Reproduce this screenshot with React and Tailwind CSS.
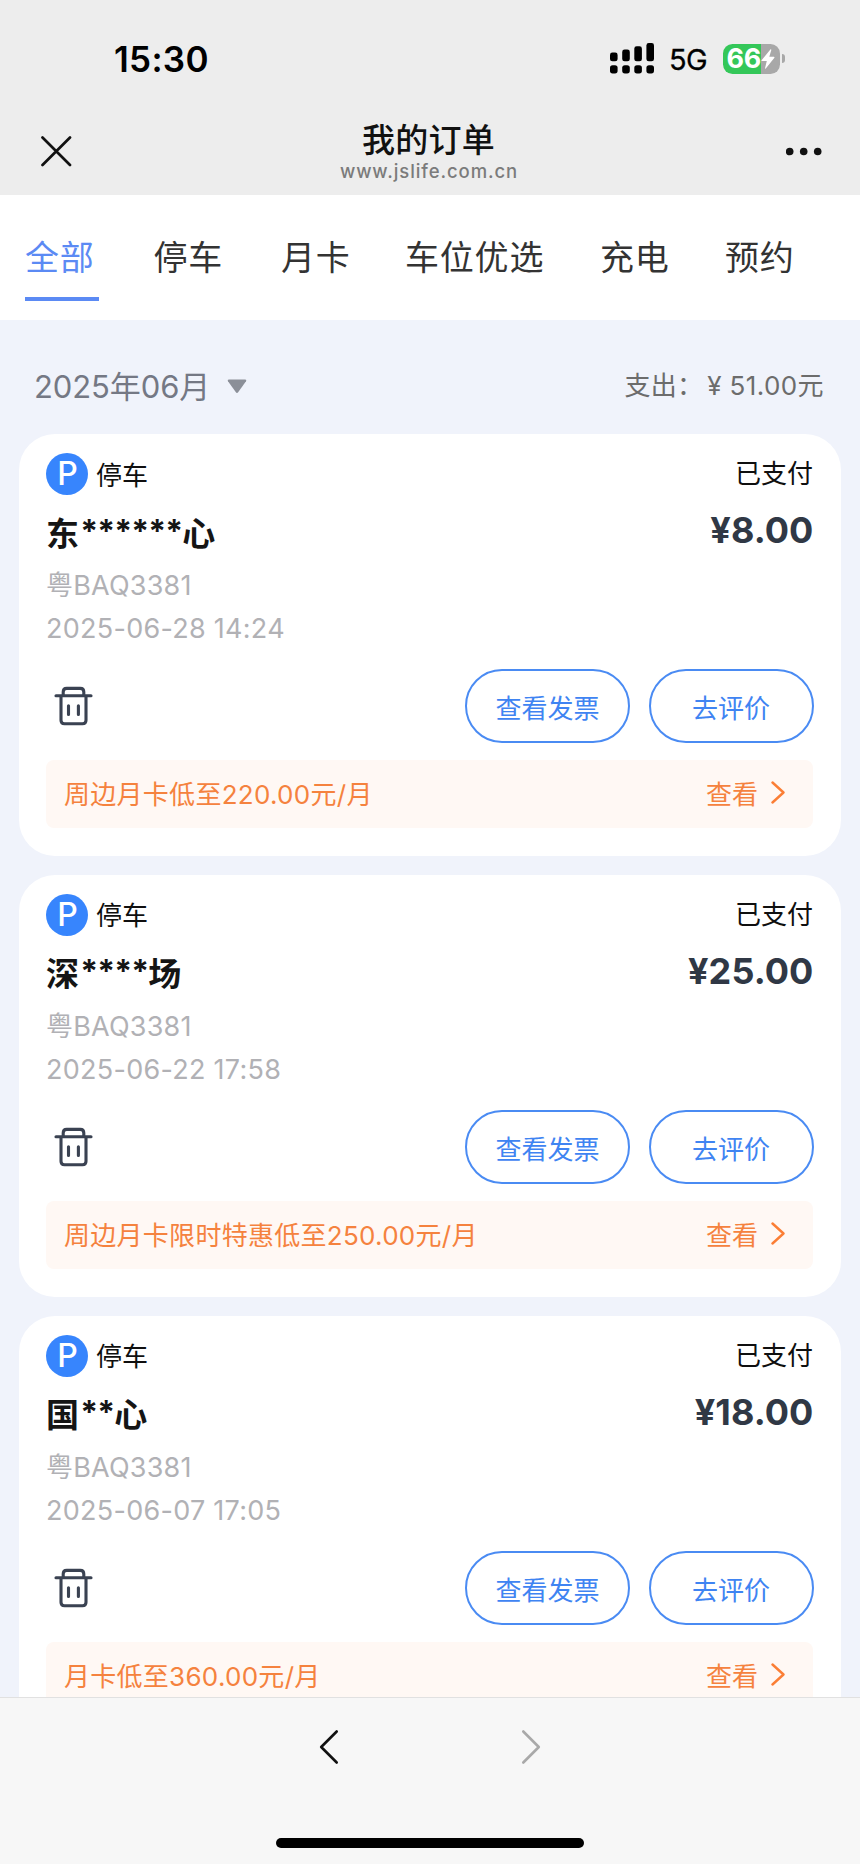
const tabs = [
  { label: '全部', active: true, width: 'w-[128.5px]' },
  { label: '停车', width: 'w-[127.5px]' },
  { label: '月卡', width: 'w-[124px]' },
  { label: '车位优选', width: 'w-[195px]' },
  { label: '充电', width: 'w-[125px]' },
  { label: '预约', width: 'w-[100px]' },
];

const orders = [
  { first: '东', mask: '******', last: '心', price: '¥8.00', time: '2025-06-28 14:24', promo: '周边月卡低至220.00元/月' },
  { first: '深', mask: '****', last: '场', price: '¥25.00', time: '2025-06-22 17:58', promo: '周边月卡限时特惠低至250.00元/月' },
  { first: '国', mask: '**', last: '心', price: '¥18.00', time: '2025-06-07 17:05', promo: '月卡低至360.00元/月' },
];

function SignalIcon() {
  return (
    <svg className="h-[31px] w-[45px]" viewBox="0 0 45 31" fill="#000">
      <rect x="0" y="9.5" width="7.6" height="8.8" rx="2.4" />
      <rect x="12.2" y="6.5" width="7.6" height="11.8" rx="2.4" />
      <rect x="24.3" y="3.3" width="7.6" height="15" rx="2.4" />
      <rect x="36.4" y="0" width="7.6" height="18.3" rx="2.4" />
      <rect x="0" y="22.2" width="7.6" height="8.2" rx="2.6" />
      <rect x="12.2" y="22.2" width="7.6" height="8.2" rx="2.6" />
      <rect x="24.3" y="22.2" width="7.6" height="8.2" rx="2.6" />
      <rect x="36.4" y="22.2" width="7.6" height="8.2" rx="2.6" />
    </svg>
  );
}

function Battery() {
  return (
    <div className="flex items-center">
      <div className="flex h-[30px] w-[57px] items-center rounded-[9.5px] bg-[linear-gradient(90deg,#34c759_38px,#a8a8a8_38px)] pl-[4px]">
        <span className="text-[27px] leading-[30px] font-bold tracking-[-0.3px] text-white">66</span>
        <svg className="ml-[0.5px] h-[20px] w-[14px] shrink-0" viewBox="0 0 14 20" fill="#fff">
          <path d="M9.6 0.3 0.6 11.2 Q0.2 12 1 12H5.8L4 19.2 Q4 20 4.8 19.5L13.4 8.7 Q13.8 7.8 12.9 7.8H8.3L10.3 0.9Q10.3 0 9.6 0.3Z" />
        </svg>
      </div>
      <div className="ml-[2px] h-[9px] w-[3.5px] rounded-r-[4px] bg-[#a8a8a8]" />
    </div>
  );
}

function TrashIcon() {
  return (
    <svg className="ml-[8px] h-[40px] w-[39px]" viewBox="0 0 39 40" fill="none" stroke="#3a4252" strokeWidth="3.1" strokeLinecap="round" strokeLinejoin="round">
      <path d="M2 9.8H37" />
      <path d="M9.2 9.5V6Q9.2 2.4 12.7 2.4H26.3Q29.8 2.4 29.8 6V9.5" />
      <path d="M7 10.5V34.3Q7 37.8 10.5 37.8H28.5Q32 37.8 32 34.3V10.5" />
      <path d="M14.5 19.7V28.5M24.4 19.7V28.5" />
    </svg>
  );
}

function OutlineButton({ children }) {
  return (
    <button className="flex h-[74px] w-[165px] items-center justify-center rounded-full border-2 border-[#4a8bf3] pt-[6px] text-[26px] leading-[30px] text-[#3f84f2]">
      {children}
    </button>
  );
}

function OrderCard({ order }) {
  return (
    <article className="flex h-[422px] shrink-0 flex-col rounded-[36px] bg-white pt-[19px] pr-[28px] pl-[27px]">
      <div className="flex h-[42px] items-center">
        <span className="flex size-[42px] items-center justify-center rounded-full bg-[#3785fd] pl-[1px] text-[32px] leading-[42px] font-medium text-white">P</span>
        <span className="ml-[8px] pt-[3px] text-[26px] leading-[40px] text-[#0f0f0f]">停车</span>
        <span className="ml-auto text-[26px] leading-[40px] text-[#0f0f0f]">已支付</span>
      </div>
      <div className="flex h-[76px] items-center justify-between">
        <h2 className="pt-[1px] text-[33px] leading-[40px] font-bold tracking-[1.3px] text-[#151515]">
          {order.first}
          <span className="align-[3px] text-[32px] leading-[30px] tracking-[-0.9px]">{order.mask}</span>
          {order.last}
        </h2>
        <span className="mr-[-0.5px] pb-[6px] text-[36px] leading-[40px] font-bold tracking-[0.1px] text-[#303845]">{order.price}</span>
      </div>
      <p className="text-[27px] leading-[30px] tracking-[0.2px] text-[#b1b1b5]">粤BAQ3381</p>
      <p className="mt-[13px] text-[27px] leading-[30px] tracking-[0.27px] text-[#b1b1b5]">{order.time}</p>
      <div className="mt-[25px] flex h-[74px] items-center">
        <TrashIcon />
        <div className="mr-[-0.5px] ml-auto flex gap-[18.5px]">
          <OutlineButton>查看发票</OutlineButton>
          <OutlineButton>去评价</OutlineButton>
        </div>
      </div>
      <div className="mt-[17px] flex h-[68px] items-center rounded-[8px] bg-[#fff8f4] pr-[28px] pl-[18px] text-[26px] leading-[34px] text-[#f5823e]">
        <span className="pt-[2px] tracking-[0.28px]">{order.promo}</span>
        <span className="ml-auto pt-[2px]">查看</span>
        <svg className="mb-[3px] ml-[13px] h-[23px] w-[14px]" viewBox="0 0 14 23" fill="none" stroke="#fb7e35" strokeWidth="2.4" strokeLinecap="round" strokeLinejoin="round">
          <path d="M1.5 1.5 12.5 11.5 1.5 21.5" />
        </svg>
      </div>
    </article>
  );
}

export default function App() {
  return (
    <div className="flex h-[1864px] w-[860px] flex-col overflow-hidden bg-[#f0f3fb] font-['Inter','Noto_Sans_CJK_SC',sans-serif]">
      <header className="h-[195px] shrink-0 bg-[#ededed]">
        <div className="flex h-[117px] items-center pr-[75px] pl-[114px]">
          <span className="text-[35px] leading-[40px] font-semibold tracking-[0.3px]">15:30</span>
          <div className="ml-auto flex items-center">
            <SignalIcon />
            <span className="mt-[3px] ml-[13.5px] text-[29px] leading-[30px] tracking-[-0.6px] [-webkit-text-stroke:0.3px_#000]">5G</span>
            <div className="ml-[15.5px]"><Battery /></div>
          </div>
        </div>
        <div className="flex h-[78px] justify-between pr-[37px] pl-[41px]">
          <svg className="mt-[19px] h-[31px] w-[31px]" viewBox="0 0 31 31" stroke="#111" strokeWidth="2.7" strokeLinecap="round">
            <path d="M1.5 1.5 29 29M29 1.5 1.5 29" />
          </svg>
          <div className="flex flex-col items-center">
            <h1 className="mt-[3px] mr-[1px] text-[33px] leading-[40px] font-medium tracking-[0.3px] text-[#111]">我的订单</h1>
            <span className="mt-[-1px] text-[18.5px] leading-[24px] font-medium tracking-[0.9px] text-[#7b7b7b]">www.jslife.com.cn</span>
          </div>
          <svg className="mt-[30px] h-[9px] w-[37px]" viewBox="0 0 37 9" fill="#111">
            <circle cx="3.7" cy="4.5" r="3.8" />
            <circle cx="17.7" cy="4.5" r="3.8" />
            <circle cx="31.7" cy="4.5" r="3.8" />
          </svg>
        </div>
      </header>

      <nav className="flex h-[125px] shrink-0 bg-white pl-[25px]">
        {tabs.map((tab) => (
          <div key={tab.label} className={`shrink-0 ${tab.width}`}>
            <div className={`mt-[42px] text-[34px] leading-[42px] tracking-[0.8px] whitespace-nowrap ${tab.active ? 'text-[#5b8af4]' : 'text-[#333]'}`}>{tab.label}</div>
            {tab.active && <div className="mt-[18px] h-[4px] w-[74px] bg-[#5b8af4]" />}
          </div>
        ))}
      </nav>

      <main className="flex min-h-0 flex-1 flex-col gap-[18.8px] overflow-hidden px-[19px]">
        <div className="flex h-[95.3px] shrink-0 items-center pt-[38px] pr-[17px] pl-[15px]">
          <span className="text-[31px] leading-[40px] tracking-[-0.1px] text-[#747884]">2025年06月</span>
          <svg className="ml-[17px] h-[15px] w-[20px]" viewBox="0 0 20 15" fill="#8b8f98">
            <path d="M1.8 0.5H18.2Q20 0.6 19 2.2L11.3 13Q10 14.8 8.7 13L1 2.2Q0 0.6 1.8 0.5Z" />
          </svg>
          <span className="ml-auto flex pb-[2px] text-[26px] leading-[38px] text-[#6c6c6c]">
            <span className="tracking-[0.3px]">支出：</span>
            <span className="ml-[4px]">¥</span>
            <span className="ml-[8px] tracking-[0.4px]">51.00元</span>
          </span>
        </div>
        {orders.map((order) => <OrderCard key={order.time} order={order} />)}
      </main>

      <footer className="flex h-[167px] shrink-0 flex-col items-center border-t border-[#e1e1e1] bg-[#f7f7f7]">
        <div className="mt-[31px] flex gap-[182px]">
          <svg className="h-[36px] w-[20px]" viewBox="0 0 20 36" fill="none" stroke="#111" strokeWidth="2.6" strokeLinecap="round" strokeLinejoin="round">
            <path d="M17.7 2.5 2.2 18 17.7 33.5" />
          </svg>
          <svg className="h-[36px] w-[20px]" viewBox="0 0 20 36" fill="none" stroke="#a9a9a9" strokeWidth="2.6" strokeLinecap="round" strokeLinejoin="round">
            <path d="M2.3 2.5 17.8 18 2.3 33.5" />
          </svg>
        </div>
        <div className="mt-[73px] h-[10px] w-[308px] rounded-full bg-black" />
      </footer>
    </div>
  );
}
